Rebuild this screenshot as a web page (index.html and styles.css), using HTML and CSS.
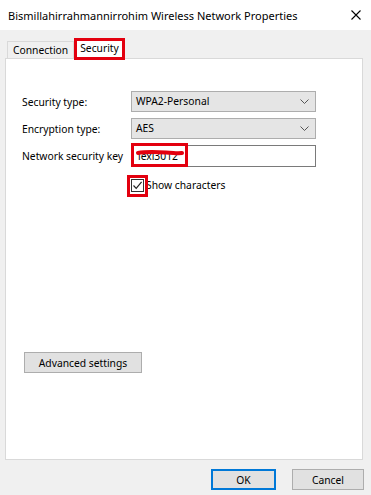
FILE: index.html
```html
<!DOCTYPE html>
<html>
<head>
<meta charset="utf-8">
<title>Wireless Network Properties</title>
<link rel="stylesheet" href="styles.css">
</head>
<body>
	<div id="window">

		<div class="titlebar">
			<span class="title">Bismillahirrahmannirrohim Wireless Network Properties</span>
			<svg class="close" width="10" height="10" viewBox="0 0 10 10">
				<path d="M0.5 0.5 L9.5 9.5 M9.5 0.5 L0.5 9.5" stroke="#000" stroke-width="1.1" fill="none"/>
			</svg>
		</div>

		<div class="client">

			<div class="tabs">
				<div class="tab">Connection</div>
				<div class="tab active">Security<span class="mark mark-tab"></span></div>
			</div>

			<div class="panel">

				<div class="row">
					<div class="label">Security type:</div>
					<div class="select">
						WPA2-Personal
						<svg class="chev" width="9" height="5" viewBox="0 0 9 5"><path d="M0.5 0.5 L4.5 4.5 L8.5 0.5" stroke="#555" fill="none"/></svg>
					</div>
				</div>

				<div class="row">
					<div class="label">Encryption type:</div>
					<div class="select">
						AES
						<svg class="chev" width="9" height="5" viewBox="0 0 9 5"><path d="M0.5 0.5 L4.5 4.5 L8.5 0.5" stroke="#555" fill="none"/></svg>
					</div>
				</div>

				<div class="row">
					<div class="label">Network security key</div>
					<div class="input">
						lexi3012
						<span class="mark mark-key"></span>
						<svg class="scribble" width="48" height="8" viewBox="0 0 48 8">
							<path d="M2 4 C10 2.5, 20 3, 30 3.5 S40 4.5, 46 4" stroke="#e3000f" stroke-width="4" stroke-linecap="round" fill="none"/>
						</svg>
					</div>
				</div>

				<div class="check-row">
					<span class="checkbox">
						<svg width="11" height="11" viewBox="0 0 11 11"><path d="M1.5 5.5 L4.2 8.3 L9.6 1.8" stroke="#222" stroke-width="1.2" fill="none"/></svg>
						<span class="mark mark-check"></span>
					</span>
					Show characters
				</div>

				<button class="btn advanced">Advanced settings</button>
			</div>

			<div class="footer">
				<button class="btn default">OK</button>
				<button class="btn">Cancel</button>
			</div>

		</div>
	</div>
</body>
</html>
```

FILE: styles.css
```css
body
{
	margin: 0;
	font-family: "Noto Sans", sans-serif;
	font-size: 10.3px;
	color: #000;
}

#window
{
	width: 371px;
	height: 495px;
	background: #f0f0f0;
	display: flex;
	flex-direction: column;
}

.titlebar
{
	height: 30px;
	background: #fff;
	display: flex;
	align-items: center;
	justify-content: space-between;
	padding: 0 10px 0 8px;
	box-sizing: border-box;
}

.title
{
	font-size: 11px;
	padding-top: 1px;
}

.close
{
	margin-top: -1px;
}

.client
{
	flex: 1;
	padding: 0 8px 0 5px;
}

/* tabs */

.tabs
{
	display: flex;
	align-items: flex-end;
	height: 28px;
	padding-left: 2px;
}

.tab
{
	position: relative;
	height: 17px;
	line-height: 17px;
	padding: 0 5px;
	border: 1px solid #d9d9d9;
	border-bottom: 0;
	background: #f0f0f0;
	box-sizing: border-box;
}

.tab.active
{
	height: 20px;
	background: #fff;
	margin-left: 1px;
	margin-bottom: -1px;
	padding: 0 4px;
	line-height: 17px;
	z-index: 1;
}

/* panel */

.panel
{
	height: 402px;
	background: #fff;
	border: 1px solid #d9d9d9;
	box-sizing: border-box;
	padding: 32px 0 0 16px;
}

.row
{
	display: flex;
	align-items: center;
	margin-bottom: 6px;
}

.label
{
	width: 109px;
	white-space: nowrap;
}

.select,
.input
{
	position: relative;
	width: 185px;
	height: 21px;
	box-sizing: border-box;
	border: 1px solid #adadad;
	background: #e5e5e5;
	padding-left: 4px;
	line-height: 19px;
}

.input
{
	height: 22px;
	background: #fff;
	border-color: #7a7a7a;
	line-height: 20px;
	padding-left: 6px;
}

.chev
{
	position: absolute;
	right: 6px;
	top: 7px;
}

.check-row
{
	display: flex;
	align-items: center;
	padding-left: 109px;
	margin-top: 11px;
	line-height: 14px;
}

.checkbox
{
	position: relative;
	width: 13px;
	height: 13px;
	box-sizing: border-box;
	border: 1px solid #333;
	margin-right: 2px;
	display: flex;
	align-items: center;
	justify-content: center;
}

.btn
{
	font-family: inherit;
	font-size: 10.3px;
	color: #000;
	background: #e1e1e1;
	border: 1px solid #adadad;
	height: 21px;
	padding: 0;
	margin: 0;
}

.advanced
{
	display: block;
	width: 118px;
	margin: 160px 0 0 2px;
}

.footer
{
	display: flex;
	justify-content: flex-end;
	gap: 16px;
	padding-top: 9px;
	margin-right: -1px;
}

.footer .btn
{
	width: 72px;
}

.btn.default
{
	width: 65px;
	border: 2px solid #0078d7;
}

/* red annotation boxes drawn over the dialog */

.mark
{
	position: absolute;
	border: 3px solid #e3000f;
	pointer-events: none;
}

.mark-tab
{
	left: -2px;
	top: -2px;
	right: -2px;
	bottom: -1px;
}

.mark-key
{
	left: -1px;
	top: -3px;
	width: 57px;
	height: 24px;
	box-sizing: border-box;
}

.mark-check
{
	left: -5px;
	top: -5px;
	width: 21px;
	height: 22px;
	box-sizing: border-box;
}

.scribble
{
	position: absolute;
	left: 4px;
	top: 3px;
}
```
